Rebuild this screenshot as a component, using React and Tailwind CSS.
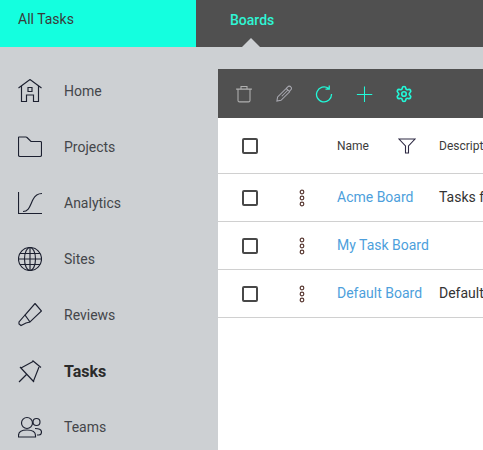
import { Settings } from 'lucide-react'

const font = { fontFamily: 'Roboto, sans-serif' }

function Icon({ children, className = 'w-6 h-6 text-[#1c2030]', strokeWidth = 1.15 }) {
  return (
    <svg viewBox="0 0 24 24" fill="none" stroke="currentColor" strokeWidth={strokeWidth} className={className}>
      {children}
    </svg>
  )
}

const navItems = [
  {
    label: 'Home',
    icon: (
      <>
        <path d="M.5 9 12 .5 23.500 9" />
        <path d="M3.500 7V22.500H8.500V16h7v6.500h5V7" />
        <path d="M10 8.500h4v4h-4z" />
      </>
    ),
  },
  {
    label: 'Projects',
    icon: <path d="M.5 2.500V20a1.500 1.500 0 0 0 1.500 1.500h20a1.500 1.500 0 0 0 1.500-1.500V7.500a1 1 0 0 0-1-1H13L9 2.500Q8.500 2 8 2H1Q.5 2 .5 2.500Z" />,
  },
  {
    label: 'Analytics',
    icon: (
      <>
        <path d="M.5 1v21.500H24" />
        <path d="M5 20.500c6 0 7-6 10-12 2-4 4-6 9-6" />
      </>
    ),
  },
  {
    label: 'Sites',
    icon: (
      <>
        <circle cx="12" cy="12" r="11.500" />
        <ellipse cx="12" cy="12" rx="5.500" ry="11.500" />
        <path d="M12 .5v23M.5 12h23M2 6.500h20M2 17.500h20" />
      </>
    ),
  },
  {
    label: 'Reviews',
    icon: (
      <>
        <path d="M17 .5 23.500 8 12 19l-5-7Z" />
        <path d="M7 12 1 19v2l2 1.500 5-2.500 4-1" />
      </>
    ),
  },
  {
    label: 'Tasks',
    active: true,
    icon: <path d="M2 8l14 15M3 9l12-6.500M14.500 1.500 23 8.500M21 8l-5.500 14M1 23l8-8" />,
  },
  {
    label: 'Teams',
    icon: (
      <>
        <circle cx="9" cy="8" r="5.500" />
        <path d="M.5 22v-1.500c0-3.500 3.500-5.500 8.500-5.500s8.500 2 8.500 5.500V22Z" />
        <circle cx="18.500" cy="7" r="3.500" />
        <path d="M17 13.500c4 0 6.500 1 6.500 3.500 0 2-1 3-2.500 3h-2" />
      </>
    ),
  },
]

const rows = [
  { name: 'Acme Board', description: 'Tasks for Acme projects' },
  { name: 'My Task Board', description: '' },
  { name: 'Default Board', description: 'Default task board' },
]

function Checkbox() {
  return <span className="block w-4 h-4 border-2 border-[#484848] rounded-[2px] shrink-0" />
}

function Dots() {
  return (
    <svg viewBox="0 0 6 18" className="w-[6px] h-[18px]" fill="none" stroke="#5a3a34" strokeWidth="1.200">
      <circle cx="3" cy="3" r="1.800" />
      <circle cx="3" cy="9" r="1.800" />
      <circle cx="3" cy="15" r="1.800" />
    </svg>
  )
}

export default function App() {
  return (
    <div className="flex flex-col h-screen overflow-hidden bg-[#cdd0d3] text-sm" style={font}>
      <header className="flex h-[47px] shrink-0 bg-[#505050]">
        <div className="w-[196px] pl-[18px] pt-[9px] bg-[#14ffdf] text-[#3a3a3a]">All Tasks</div>
        <div className="relative pl-[34px] pt-[10px] font-medium text-[#2ff5d5]">
          Boards
          <span className="absolute left-[46px] top-[38px] w-0 h-0 border-x-[9px] border-x-transparent border-b-[9px] border-b-[#cdd0d3]" />
        </div>
      </header>

      <div className="flex flex-1 min-h-0">
        <nav className="w-[218px] shrink-0 pt-4">
          {navItems.map((item) => (
            <div key={item.label} className="flex items-center h-14 pl-[18px]">
              <Icon>{item.icon}</Icon>
              <span className={item.active ? 'ml-[22px] pt-0.5 text-base font-bold text-[#2b2b2b]' : 'ml-[22px] text-[#44464a]'}>
                {item.label}
              </span>
            </div>
          ))}
        </nav>

        <main className="flex-1 min-w-0 mt-[22px] bg-white">
          <div className="flex items-center gap-[22px] h-[49px] pl-[17px] bg-[#505050]">
            <Icon className="w-[18px] h-[18px] text-[#b0b0b0]" strokeWidth={1.4}>
              <path d="M1.500 5.500h21M8 5.500V2h8v3.500M4 5.500v15q0 2 2 2h12q2 0 2-2v-15" />
            </Icon>
            <Icon className="w-[18px] h-[18px] text-[#a8a8b0]" strokeWidth={1.4}>
              <path d="M2.500 21.500 3.500 16 15 4.500 19.500 9 8 20.500ZM15 4.500l2-2a2.500 2.500 0 0 1 4 0 2.500 2.500 0 0 1 0 4l-2 2M17 7l-8 8" />
            </Icon>
            <Icon className="w-[18px] h-[18px] text-[#22f8d8]" strokeWidth={1.7}>
              <path d="M18 4.500A10 10 0 1 0 22 12M19 .5v5h-5" />
            </Icon>
            <Icon className="w-[18px] h-[18px] text-[#22f8d8]" strokeWidth={1.4}>
              <path d="M12.670 2v20.500M2.500 12.670h20.500" />
            </Icon>
            <Settings className="w-[18px] h-[18px] text-[#22f8d8]" strokeWidth={2.2} />
          </div>

          <div className="flex items-center h-[56px] border-b border-[#d0d0d0] text-xs text-[#3c3c3c]">
            <div className="w-[119px] pl-[24px] shrink-0"><Checkbox /></div>
            <span className="w-[61px] shrink-0">Name</span>
            <svg viewBox="0 0 18 18" className="w-[18px] h-[18px] shrink-0" fill="none" stroke="#2e2a44" strokeWidth="1.100">
              <path d="M1 2h16l-6.500 7v7H7.500V9Z" />
            </svg>
            <span className="ml-[23px] whitespace-nowrap">Description</span>
          </div>

          {rows.map((row) => (
            <div key={row.name} className="flex items-center h-12 border-b border-[#d0d0d0] whitespace-nowrap">
              <div className="w-[81px] pl-[24px] shrink-0"><Checkbox /></div>
              <div className="w-[38px] shrink-0"><Dots /></div>
              <span className="w-[102px] shrink-0 pb-0.5 text-[#4d9fdc]">{row.name}</span>
              <span className="pb-0.5 text-[#333333]">{row.description}</span>
            </div>
          ))}
        </main>
      </div>
    </div>
  )
}
